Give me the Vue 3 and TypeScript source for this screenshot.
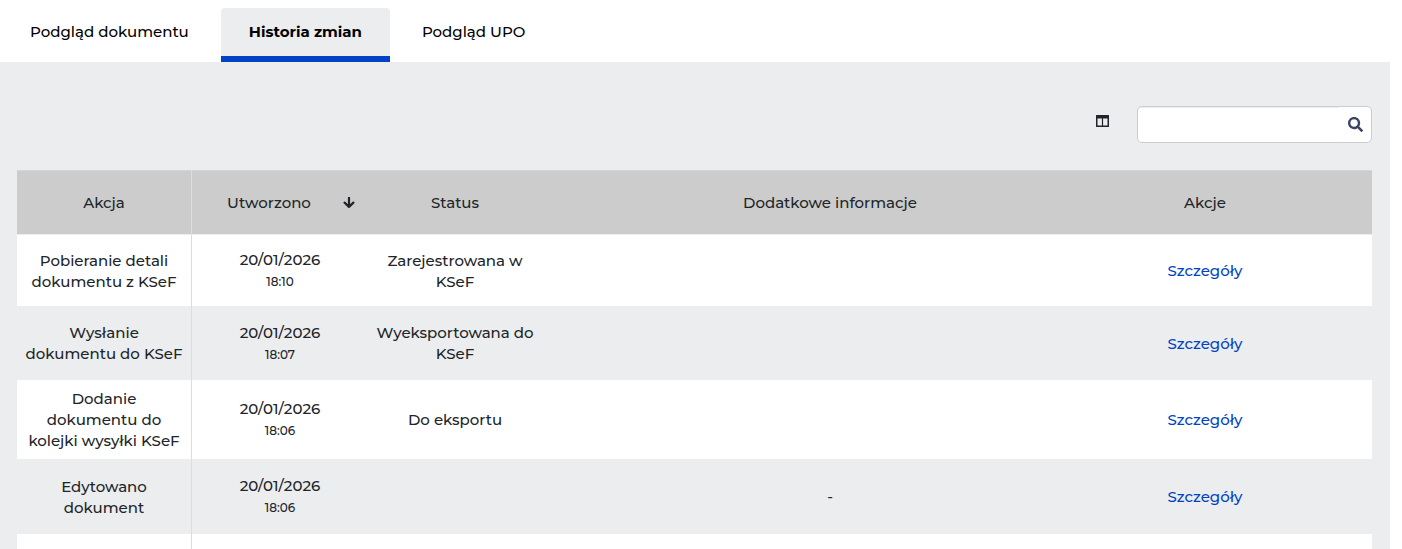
<script setup lang="ts">
import { ref } from 'vue'

interface HistoryEntry {
  action: string
  date: string
  time: string
  status: string
  info: string
}

const tabs: string[] = ['Podgląd dokumentu', 'Historia zmian', 'Podgląd UPO']
const activeTab = ref<string>('Historia zmian')
const query = ref<string>('')

const entries: HistoryEntry[] = [
  { action: 'Pobieranie detali dokumentu z KSeF', date: '20/01/2026', time: '18:10', status: 'Zarejestrowana w KSeF', info: '' },
  { action: 'Wysłanie dokumentu do KSeF', date: '20/01/2026', time: '18:07', status: 'Wyeksportowana do KSeF', info: '' },
  { action: 'Dodanie dokumentu do kolejki wysyłki KSeF', date: '20/01/2026', time: '18:06', status: 'Do eksportu', info: '' },
  { action: 'Edytowano dokument', date: '20/01/2026', time: '18:06', status: '', info: '-' },
]
</script>

<template>
  <div class="page">
    <nav class="tabs" role="tablist">
      <button
        v-for="tab in tabs"
        :key="tab"
        type="button"
        role="tab"
        class="tab"
        :class="{ active: tab === activeTab }"
        :aria-selected="tab === activeTab"
        @click="activeTab = tab"
      >{{ tab }}</button>
    </nav>

    <main class="panel">
      <div class="toolbar">
        <button type="button" class="columns" aria-label="Kolumny">
          <svg width="13" height="12" viewBox="0 0 13 12" aria-hidden="true">
            <path fill="#212529" fill-rule="evenodd" d="M.5 0h12a.5.5 0 0 1 .5.5v11a.5.5 0 0 1-.5.5H.5a.5.5 0 0 1-.5-.5V.5A.5.5 0 0 1 .5 0zM1.500 3.500v7h4.400v-7zM7.100 3.500v7h4.400v-7z" />
          </svg>
        </button>
        <form class="search" role="search" @submit.prevent>
          <input v-model="query" type="text" aria-label="Szukaj" />
          <button type="submit" aria-label="Szukaj">
            <svg width="15" height="15" viewBox="0 0 512 512" aria-hidden="true">
              <path fill="#3b4264" d="M505 442.700 405.300 343c-4.500-4.500-10.600-7-17-7H372c27.600-35.300 44-79.700 44-128C416 93.100 322.900 0 208 0S0 93.100 0 208s93.100 208 208 208c48.300 0 92.700-16.400 128-44v16.300c0 6.400 2.500 12.500 7 17l99.700 99.700c9.400 9.400 24.600 9.400 33.900 0l28.300-28.300c9.400-9.400 9.400-24.600.1-34zM208 336c-70.700 0-128-57.200-128-128 0-70.700 57.200-128 128-128 70.700 0 128 57.200 128 128 0 70.700-57.200 128-128 128z" />
            </svg>
          </button>
        </form>
      </div>

      <table class="history">
        <colgroup>
          <col class="c-action" />
          <col class="c-date" />
          <col class="c-status" />
          <col />
          <col class="c-links" />
          <col class="c-end" />
        </colgroup>
        <thead>
          <tr>
            <th scope="col">Akcja</th>
            <th scope="col" aria-sort="descending">
              <button type="button" class="sort">
                <span class="sort-label">Utworzono</span>
                <span class="sort-icon">
                  <svg width="12" height="12" viewBox="0 0 12 12" aria-hidden="true">
                    <path d="M6 .8v9M1.600 5.600 6 9.900 10.400 5.600" fill="none" stroke="#212529" stroke-width="2.200" stroke-linecap="round" stroke-linejoin="round" />
                  </svg>
                </span>
              </button>
            </th>
            <th scope="col">Status</th>
            <th scope="col">Dodatkowe informacje</th>
            <th scope="col">Akcje</th>
            <td></td>
          </tr>
        </thead>
        <tbody>
          <tr v-for="entry in entries" :key="entry.action">
            <td>{{ entry.action }}</td>
            <td>{{ entry.date }}<small>{{ entry.time }}</small></td>
            <td>{{ entry.status }}</td>
            <td>{{ entry.info }}</td>
            <td><a href="#">Szczegóły</a></td>
            <td></td>
          </tr>
          <tr>
            <td v-for="n in 6" :key="n"></td>
          </tr>
        </tbody>
      </table>
    </main>
  </div>
</template>

<style>
body {
  margin: 0;
  background: #fff;
}
</style>

<style scoped>
.page {
  display: flex;
  flex-direction: column;
  height: 100vh;
  overflow: hidden;
  box-sizing: border-box;
  padding-right: 12px;
  font-family: Montserrat, Inter, "Noto Sans", sans-serif;
  font-size: 15px;
  font-weight: 500;
  line-height: 21px;
  color: #212529;
}

button {
  margin: 0;
  padding: 0;
  border: 0;
  background: none;
  font: inherit;
  color: inherit;
  cursor: pointer;
}

.tabs {
  display: flex;
  flex: none;
  gap: 4px;
  padding: 8px 2px 0;
}

.tab {
  height: 54px;
  padding: 0 28px 8px;
  border-radius: 4px 4px 0 0;
  color: #000;
  white-space: nowrap;
}

.tab.active {
  background: #ecedef;
  box-shadow: inset 0 -6px #0043c4;
  font-weight: 700;
}

.panel {
  flex: 1;
  padding: 44px 18px 0 17px;
  background: #ecedef;
}

.toolbar {
  display: flex;
  justify-content: flex-end;
  gap: 28px;
  margin-bottom: 27px;
}

.columns {
  display: flex;
  align-items: center;
  height: 30px;
}

.search {
  display: flex;
  box-sizing: border-box;
  width: 235px;
  height: 37px;
  border: 1px solid #ccc;
  border-radius: 5px;
  background: #fff;
  overflow: hidden;
}

.search input {
  flex: 1;
  min-width: 0;
  padding: 0 12px;
  border: 0;
  outline: 0;
  background: transparent;
  box-shadow: inset 0 1px 1px rgba(0, 0, 0, 0.07);
  font: inherit;
}

.search button {
  display: flex;
  align-items: center;
  justify-content: center;
  width: 32px;
}

.history {
  width: 100%;
  table-layout: fixed;
  border-collapse: separate;
  border-spacing: 0;
  text-align: center;
}

.c-action {
  width: 175px;
}

.c-date {
  width: 176px;
}

.c-status,
.c-links {
  width: 174px;
}

.c-end {
  width: 80px;
}

th,
td {
  box-sizing: border-box;
  padding: 8px;
  vertical-align: middle;
  font-weight: 500;
}

th:first-child,
td:first-child {
  border-right: 1px solid #dcddde;
}

thead tr {
  height: 65px;
  background: #ccc;
}

thead th,
thead td {
  border-top: 1px solid #d5d6d8;
  border-bottom: 1px solid #ecedef;
}

tbody tr {
  height: 74px;
}

tbody tr:first-child {
  height: 71px;
}

tbody tr:nth-child(4) {
  height: 75px;
}

tbody tr:nth-child(odd) {
  background: #fff;
}

.sort {
  display: flex;
  align-items: center;
  width: 100%;
}

.sort-label {
  flex: 1;
}

.sort-icon {
  display: flex;
  justify-content: center;
  width: 22px;
}

small {
  display: block;
  padding-top: 1px;
  font-size: 12px;
}

a {
  color: #0043c4;
  text-decoration: none;
}
</style>
